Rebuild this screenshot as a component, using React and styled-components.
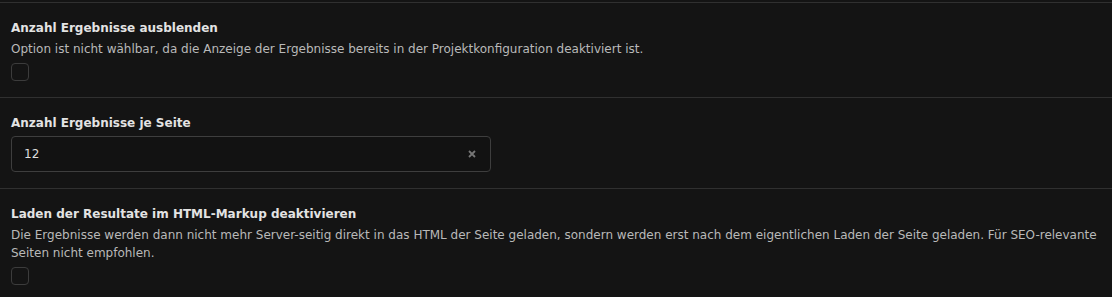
import React, { useState } from 'react'
import styled, { createGlobalStyle } from 'styled-components'

const GlobalStyle = createGlobalStyle`
  html, body {
    margin: 0;
    padding: 0;
    background: #141414;
  }
  body {
    font-family: 'DejaVu Sans', Verdana, sans-serif;
    color: #e3e3e3;
  }
`

const Page = styled.div`
  padding-top: 2px;
  background: #141414;
  min-height: 295px;
`

const Section = styled.div`
  border-top: 1px solid #303030;
  padding: 16px 11px;
  display: flex;
  flex-direction: column;
  align-items: flex-start;
`

const Label = styled.div`
  font-size: 12px;
  line-height: 18px;
  font-weight: bold;
  color: #e3e3e3;
  margin-bottom: ${(p) => (p.$tight ? '4px' : '3px')};
`

const Hint = styled.div`
  font-size: 12px;
  line-height: 18px;
  color: #b9b9b9;
  margin-bottom: 5px;
`

const Check = styled.input.attrs({ type: 'checkbox' })`
  appearance: none;
  margin: 0;
  width: 18px;
  height: 18px;
  border: 1px solid #3c3c3c;
  border-radius: 4px;
  background: transparent;
  box-sizing: border-box;
`

const InputBox = styled.div`
  width: 480px;
  height: 36px;
  box-sizing: border-box;
  border: 1px solid #3e3e3e;
  border-radius: 4px;
  display: flex;
  align-items: center;
  padding: 0 13px 0 12px;
  background: #121212;
`

const Field = styled.input`
  flex: 1;
  border: 0;
  outline: none;
  background: transparent;
  color: #dedede;
  font-family: 'DejaVu Sans', Verdana, sans-serif;
  font-size: 12px;
  padding: 0;
`

const Clear = styled.button`
  border: 0;
  background: transparent;
  padding: 0;
  width: 10px;
  height: 10px;
  display: flex;
  align-items: center;
  justify-content: center;
  cursor: pointer;
`

const App = () => {
  const [value, setValue] = useState('12')

  return (
    <>
      <GlobalStyle />
      <Page>
        <Section>
          <Label>Anzahl Ergebnisse ausblenden</Label>
          <Hint>
            Option ist nicht wählbar, da die Anzeige der Ergebnisse bereits in der
            Projektkonfiguration deaktiviert ist.
          </Hint>
          <Check disabled />
        </Section>

        <Section>
          <Label $tight>Anzahl Ergebnisse je Seite</Label>
          <InputBox>
            <Field value={value} onChange={(e) => setValue(e.target.value)} />
            <Clear onClick={() => setValue('')}>
              <svg width='8' height='8' viewBox='0 0 8 8'>
                <path d='M1 1L7 7M7 1L1 7' stroke='#767676' strokeWidth='1.8' />
              </svg>
            </Clear>
          </InputBox>
        </Section>

        <Section>
          <Label>Laden der Resultate im HTML-Markup deaktivieren</Label>
          <Hint>
            Die Ergebnisse werden dann nicht mehr Server-seitig direkt in das HTML
            der Seite geladen, sondern werden erst nach dem eigentlichen Laden der
            Seite geladen. Für SEO-relevante Seiten nicht empfohlen.
          </Hint>
          <Check />
        </Section>
      </Page>
    </>
  )
}

export default App
